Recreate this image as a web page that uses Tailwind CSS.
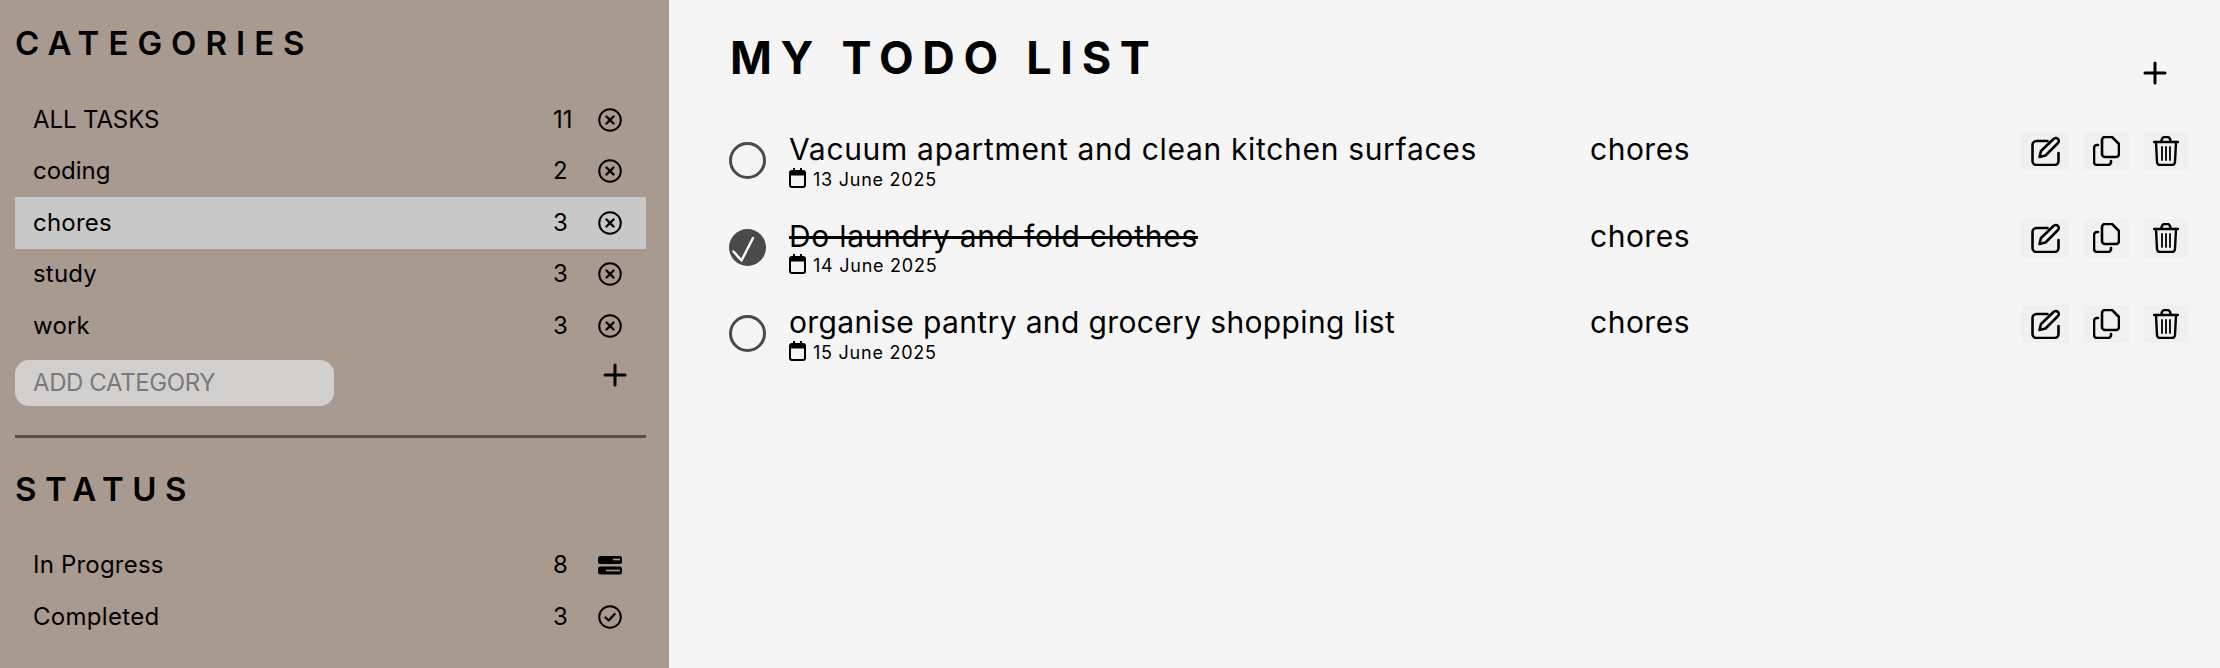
<!DOCTYPE html>
<html>
<head>
<meta charset="utf-8">
<script src="https://cdn.jsdelivr.net/npm/@tailwindcss/browser@4"></script>
</head>
<body class="m-0 font-['Inter',sans-serif] text-black bg-[#f5f5f5]">
<div class="flex h-[668px] w-[2220px] overflow-hidden">
  <aside class="w-[669px] shrink-0 bg-[#a89a8e] pl-[15px] pr-[23px] pt-[25px]">
    <h2 class="text-[33px] leading-[36px] font-semibold tracking-[9px] h-[69px]">CATEGORIES</h2>
    <ul class="flex flex-col font-[380]">
      <li class="flex items-center h-[51.5px] pl-[18px] text-[24px]"><span class="flex-1 tracking-[-0.1px]">ALL TASKS</span><span class="w-[45px]">11</span><svg class="w-[24px] h-[24px] mr-[24px]" viewBox="0 0 24 24" fill="none" stroke="currentColor" stroke-width="2"><circle cx="12" cy="12" r="10.8"/><path d="M8.500 8.500l7 7M15.500 8.500l-7 7" stroke-width="2.4" stroke-linecap="round"/></svg></li>
      <li class="flex items-center h-[51.5px] pl-[18px] text-[24px]"><span class="flex-1">coding</span><span class="w-[45px]">2</span><svg class="w-[24px] h-[24px] mr-[24px]" viewBox="0 0 24 24" fill="none" stroke="currentColor" stroke-width="2"><circle cx="12" cy="12" r="10.8"/><path d="M8.500 8.500l7 7M15.500 8.500l-7 7" stroke-width="2.4" stroke-linecap="round"/></svg></li>
      <li class="flex items-center h-[51.5px] pl-[18px] text-[24px] bg-[#c8c8c8]"><span class="flex-1 tracking-[0.2px]">chores</span><span class="w-[45px]">3</span><svg class="w-[24px] h-[24px] mr-[24px]" viewBox="0 0 24 24" fill="none" stroke="currentColor" stroke-width="2"><circle cx="12" cy="12" r="10.8"/><path d="M8.500 8.500l7 7M15.500 8.500l-7 7" stroke-width="2.4" stroke-linecap="round"/></svg></li>
      <li class="flex items-center h-[51.5px] pl-[18px] text-[24px]"><span class="flex-1 tracking-[0.2px]">study</span><span class="w-[45px]">3</span><svg class="w-[24px] h-[24px] mr-[24px]" viewBox="0 0 24 24" fill="none" stroke="currentColor" stroke-width="2"><circle cx="12" cy="12" r="10.8"/><path d="M8.500 8.500l7 7M15.500 8.500l-7 7" stroke-width="2.4" stroke-linecap="round"/></svg></li>
      <li class="flex items-center h-[51.5px] pl-[18px] text-[24px]"><span class="flex-1 tracking-[0.2px]">work</span><span class="w-[45px]">3</span><svg class="w-[24px] h-[24px] mr-[24px]" viewBox="0 0 24 24" fill="none" stroke="currentColor" stroke-width="2"><circle cx="12" cy="12" r="10.8"/><path d="M8.500 8.500l7 7M15.500 8.500l-7 7" stroke-width="2.4" stroke-linecap="round"/></svg></li>
    </ul>
    <div class="flex items-start justify-between h-[83.5px] pt-[8px]">
      <div class="w-[319px] h-[46px] rounded-[14px] bg-[#d2d0ce] pl-[18px] flex items-center text-[24px] font-[380] tracking-[-0.4px] text-[#7a7a7a]">ADD CATEGORY</div>
      <svg class="w-[24px] h-[24px] mr-[19px] mt-[3px]" viewBox="0 0 24 24" fill="none" stroke="currentColor" stroke-width="3" stroke-linecap="round"><path d="M12 2v20M2 12h20"/></svg>
    </div>
    <div class="h-[3px] bg-[#5c5046]"></div>
    <h2 class="mt-[33px] text-[33px] leading-[36px] font-semibold tracking-[8.5px] h-[68px]">STATUS</h2>
    <ul class="flex flex-col font-[380]">
      <li class="flex items-center h-[52px] pl-[18px] text-[24px]"><span class="flex-1 tracking-[0.2px]">In Progress</span><span class="w-[45px]">8</span><svg class="w-[24px] h-[24px] mr-[24px]" viewBox="0 0 24 24"><rect x="0" y="3" width="24" height="8" rx="2.5"/><rect x="0" y="13.500" width="24" height="8" rx="2.5"/><path d="M15 6.500h7" stroke="#a89a8e" stroke-width="1.6"/><path d="M8 17.500h14" stroke="#a89a8e" stroke-width="1.6"/></svg></li>
      <li class="flex items-center h-[52px] pl-[18px] text-[24px]"><span class="flex-1 tracking-[0.3px]">Completed</span><span class="w-[45px]">3</span><svg class="w-[24px] h-[24px] mr-[24px]" viewBox="0 0 24 24" fill="none" stroke="currentColor" stroke-width="2"><circle cx="12" cy="12" r="10.8"/><path d="M7.500 12.500l3.200 3 6-6.500" stroke-width="2.2" stroke-linecap="round" stroke-linejoin="round"/></svg></li>
    </ul>
  </aside>
  <main class="flex-1 pl-[60px] pr-[32px] pt-[33px]">
    <div class="flex justify-between h-[84px]">
      <h1 class="text-[45px] leading-[50px] font-bold tracking-[8.7px] pl-[1px]">MY TODO LIST</h1>
      <svg class="w-[24px] h-[24px] mt-[28px] mr-[21px]" viewBox="0 0 24 24" fill="none" stroke="currentColor" stroke-width="3" stroke-linecap="round"><path d="M12 2v20M2 12h20"/></svg>
    </div>
    <ul class="flex flex-col">
      <li class="flex items-start h-[86.5px]">
        <span class="w-[37px] h-[37px] mt-[25px] rounded-full border-[3px] border-[#4a4a4a] shrink-0"></span>
        <div class="ml-[23px] w-[801px] shrink-0 mt-[15px] font-[380]">
          <div class="text-[30px] leading-[34px] tracking-[0.68px]">Vacuum apartment and clean kitchen surfaces</div>
          <div class="flex items-center gap-[7px] h-[26px] text-[18px] tracking-[0.75px]"><svg class="w-[17px] h-[20px] -mt-[3px]" viewBox="0 0 17 20" fill="none" stroke="currentColor" stroke-width="2"><rect x="1" y="3" width="15" height="16" rx="2"/><path d="M1 5.500h15" stroke-width="4"/><path d="M5 0v3M12 0v3"/></svg>13 June 2025</div>
        </div>
        <span class="flex-1 mt-[15px] text-[30px] leading-[34px] tracking-[0.5px] font-[380]">chores</span>
        <div class="flex gap-[15px] mt-[15px]">
          <span class="w-[48px] h-[38px] bg-[#f0f0f0] flex items-center justify-center"><svg class="w-[29px] h-[30px]" viewBox="0 0 28 30" fill="none" stroke="currentColor" stroke-width="2.6" stroke-linecap="round" stroke-linejoin="round"><path d="M16 5H5a4 4 0 0 0-4 4v16a4 4 0 0 0 4 4h18a4 4 0 0 0 4-4v-8"/><path d="M8 21l1.500-6L22 3a3 3 0 0 1 4.500 4L14 19.500z"/></svg></span>
          <span class="w-[45px] h-[38px] bg-[#f0f0f0] flex items-center justify-center"><svg class="w-[27px] h-[30px]" viewBox="0 0 27 30" fill="none" stroke="currentColor" stroke-width="2.6" stroke-linecap="round" stroke-linejoin="round"><path d="M9 4a3 3 0 0 1 3-3h7l7 7v10a3 3 0 0 1-3 3H12a3 3 0 0 1-3-3z"/><path d="M5 9H4a3 3 0 0 0-3 3v14a3 3 0 0 0 3 3h11a3 3 0 0 0 3-3v-1"/></svg></span>
          <span class="w-[44px] h-[38px] bg-[#f0f0f0] flex items-center justify-center"><svg class="w-[26px] h-[30px]" viewBox="0 0 26 30" fill="none" stroke="currentColor" stroke-width="2.4" stroke-linecap="round" stroke-linejoin="round"><path d="M1 6h24M8 6l1-3a3 3 0 0 1 2-2h4a3 3 0 0 1 2 2l1 3"/><path d="M3 6l1 20a3 3 0 0 0 3 3h12a3 3 0 0 0 3-3l1-20"/><path d="M9 11v13M13 11v13M17 11v13" stroke-width="1.8"/></svg></span>
        </div>
      </li>
      <li class="flex items-start h-[86.5px]">
        <span class="w-[37px] h-[37px] mt-[25px] rounded-full bg-[#4a4a4a] shrink-0"><svg class="w-[37px] h-[37px]" viewBox="0 0 37 37" fill="none" stroke="#fff" stroke-width="2.4" stroke-linecap="round" stroke-linejoin="round"><path d="M4.500 22.500L12.500 31.500L24 9"/></svg></span>
        <div class="ml-[23px] w-[801px] shrink-0 mt-[15px] font-[380]">
          <div class="text-[30px] leading-[34px] tracking-[0.7px] line-through">Do laundry and fold clothes</div>
          <div class="flex items-center gap-[7px] h-[26px] text-[18px] tracking-[0.75px]"><svg class="w-[17px] h-[20px] -mt-[3px]" viewBox="0 0 17 20" fill="none" stroke="currentColor" stroke-width="2"><rect x="1" y="3" width="15" height="16" rx="2"/><path d="M1 5.500h15" stroke-width="4"/><path d="M5 0v3M12 0v3"/></svg>14 June 2025</div>
        </div>
        <span class="flex-1 mt-[15px] text-[30px] leading-[34px] tracking-[0.5px] font-[380]">chores</span>
        <div class="flex gap-[15px] mt-[15px]">
          <span class="w-[48px] h-[38px] bg-[#f0f0f0] flex items-center justify-center"><svg class="w-[29px] h-[30px]" viewBox="0 0 28 30" fill="none" stroke="currentColor" stroke-width="2.6" stroke-linecap="round" stroke-linejoin="round"><path d="M16 5H5a4 4 0 0 0-4 4v16a4 4 0 0 0 4 4h18a4 4 0 0 0 4-4v-8"/><path d="M8 21l1.500-6L22 3a3 3 0 0 1 4.500 4L14 19.500z"/></svg></span>
          <span class="w-[45px] h-[38px] bg-[#f0f0f0] flex items-center justify-center"><svg class="w-[27px] h-[30px]" viewBox="0 0 27 30" fill="none" stroke="currentColor" stroke-width="2.6" stroke-linecap="round" stroke-linejoin="round"><path d="M9 4a3 3 0 0 1 3-3h7l7 7v10a3 3 0 0 1-3 3H12a3 3 0 0 1-3-3z"/><path d="M5 9H4a3 3 0 0 0-3 3v14a3 3 0 0 0 3 3h11a3 3 0 0 0 3-3v-1"/></svg></span>
          <span class="w-[44px] h-[38px] bg-[#f0f0f0] flex items-center justify-center"><svg class="w-[26px] h-[30px]" viewBox="0 0 26 30" fill="none" stroke="currentColor" stroke-width="2.4" stroke-linecap="round" stroke-linejoin="round"><path d="M1 6h24M8 6l1-3a3 3 0 0 1 2-2h4a3 3 0 0 1 2 2l1 3"/><path d="M3 6l1 20a3 3 0 0 0 3 3h12a3 3 0 0 0 3-3l1-20"/><path d="M9 11v13M13 11v13M17 11v13" stroke-width="1.8"/></svg></span>
        </div>
      </li>
      <li class="flex items-start h-[86.5px]">
        <span class="w-[37px] h-[37px] mt-[25px] rounded-full border-[3px] border-[#4a4a4a] shrink-0"></span>
        <div class="ml-[23px] w-[801px] shrink-0 mt-[15px] font-[380]">
          <div class="text-[30px] leading-[34px] tracking-[0.36px]">organise pantry and grocery shopping list</div>
          <div class="flex items-center gap-[7px] h-[26px] text-[18px] tracking-[0.75px]"><svg class="w-[17px] h-[20px] -mt-[3px]" viewBox="0 0 17 20" fill="none" stroke="currentColor" stroke-width="2"><rect x="1" y="3" width="15" height="16" rx="2"/><path d="M1 5.500h15" stroke-width="4"/><path d="M5 0v3M12 0v3"/></svg>15 June 2025</div>
        </div>
        <span class="flex-1 mt-[15px] text-[30px] leading-[34px] tracking-[0.5px] font-[380]">chores</span>
        <div class="flex gap-[15px] mt-[15px]">
          <span class="w-[48px] h-[38px] bg-[#f0f0f0] flex items-center justify-center"><svg class="w-[29px] h-[30px]" viewBox="0 0 28 30" fill="none" stroke="currentColor" stroke-width="2.6" stroke-linecap="round" stroke-linejoin="round"><path d="M16 5H5a4 4 0 0 0-4 4v16a4 4 0 0 0 4 4h18a4 4 0 0 0 4-4v-8"/><path d="M8 21l1.500-6L22 3a3 3 0 0 1 4.500 4L14 19.500z"/></svg></span>
          <span class="w-[45px] h-[38px] bg-[#f0f0f0] flex items-center justify-center"><svg class="w-[27px] h-[30px]" viewBox="0 0 27 30" fill="none" stroke="currentColor" stroke-width="2.6" stroke-linecap="round" stroke-linejoin="round"><path d="M9 4a3 3 0 0 1 3-3h7l7 7v10a3 3 0 0 1-3 3H12a3 3 0 0 1-3-3z"/><path d="M5 9H4a3 3 0 0 0-3 3v14a3 3 0 0 0 3 3h11a3 3 0 0 0 3-3v-1"/></svg></span>
          <span class="w-[44px] h-[38px] bg-[#f0f0f0] flex items-center justify-center"><svg class="w-[26px] h-[30px]" viewBox="0 0 26 30" fill="none" stroke="currentColor" stroke-width="2.4" stroke-linecap="round" stroke-linejoin="round"><path d="M1 6h24M8 6l1-3a3 3 0 0 1 2-2h4a3 3 0 0 1 2 2l1 3"/><path d="M3 6l1 20a3 3 0 0 0 3 3h12a3 3 0 0 0 3-3l1-20"/><path d="M9 11v13M13 11v13M17 11v13" stroke-width="1.8"/></svg></span>
        </div>
      </li>
    </ul>
  </main>
</div>
</body>
</html>
